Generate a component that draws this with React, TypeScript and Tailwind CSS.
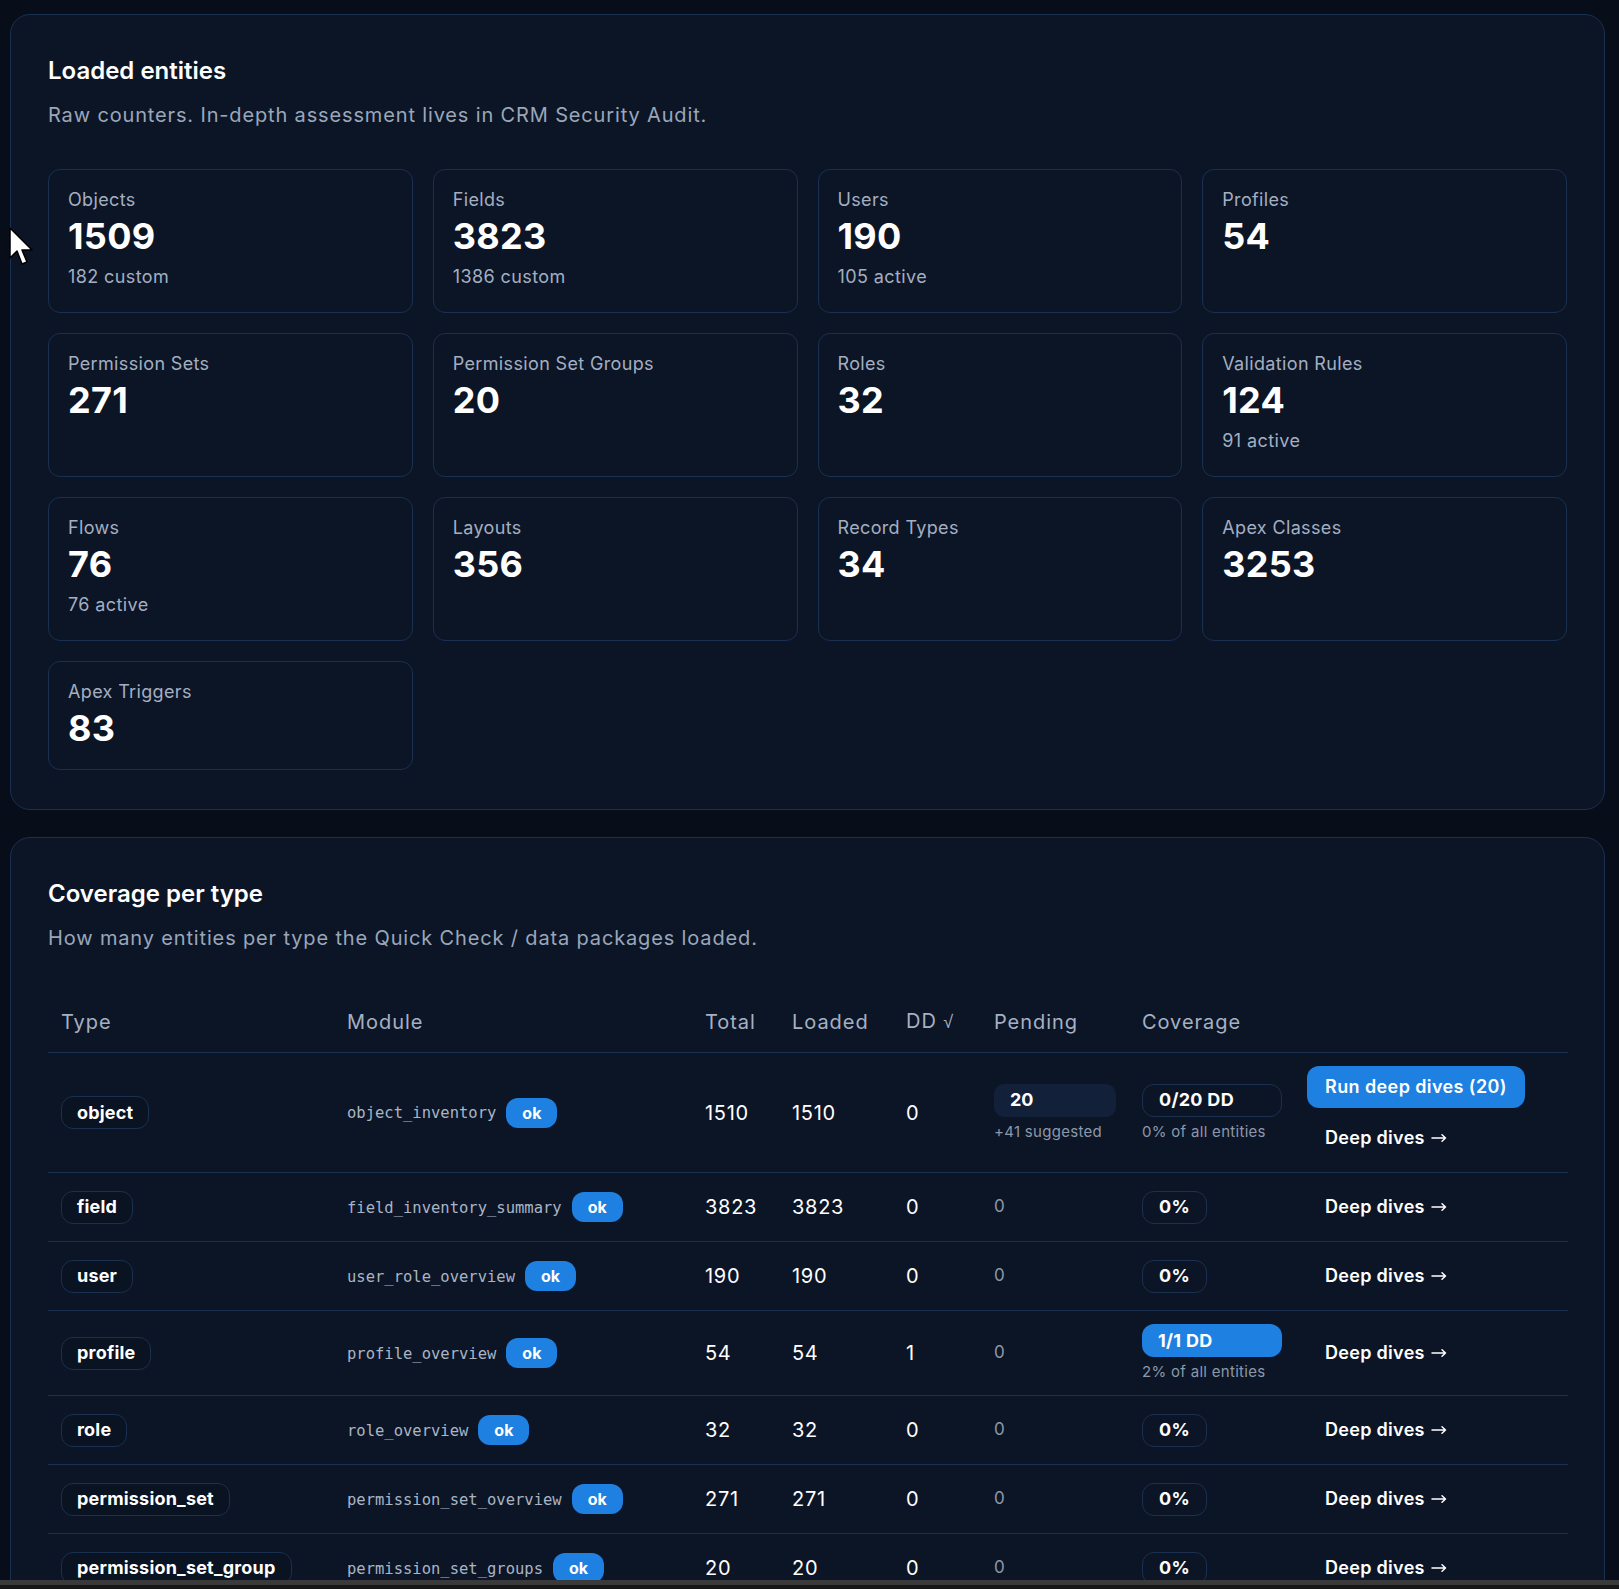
import React from "react";

type Stat = { label: string; value: string; sub?: string };

const stats: Stat[] = [
  { label: "Objects", value: "1509", sub: "182 custom" },
  { label: "Fields", value: "3823", sub: "1386 custom" },
  { label: "Users", value: "190", sub: "105 active" },
  { label: "Profiles", value: "54" },
  { label: "Permission Sets", value: "271" },
  { label: "Permission Set Groups", value: "20" },
  { label: "Roles", value: "32" },
  { label: "Validation Rules", value: "124", sub: "91 active" },
  { label: "Flows", value: "76", sub: "76 active" },
  { label: "Layouts", value: "356" },
  { label: "Record Types", value: "34" },
  { label: "Apex Classes", value: "3253" },
  { label: "Apex Triggers", value: "83" },
];

type Row = {
  type: string;
  module: string;
  total: string;
  loaded: string;
  dd: string;
  pending: string;
  pendingSub?: string;
  coverage: string;
  coverageSub?: string;
  filled?: boolean;
  run?: string;
};

const rows: Row[] = [
  {
    type: "object",
    module: "object_inventory",
    total: "1510",
    loaded: "1510",
    dd: "0",
    pending: "20",
    pendingSub: "+41 suggested",
    coverage: "0/20 DD",
    coverageSub: "0% of all entities",
    run: "Run deep dives (20)",
  },
  { type: "field", module: "field_inventory_summary", total: "3823", loaded: "3823", dd: "0", pending: "0", coverage: "0%" },
  { type: "user", module: "user_role_overview", total: "190", loaded: "190", dd: "0", pending: "0", coverage: "0%" },
  {
    type: "profile",
    module: "profile_overview",
    total: "54",
    loaded: "54",
    dd: "1",
    pending: "0",
    coverage: "1/1 DD",
    coverageSub: "2% of all entities",
    filled: true,
  },
  { type: "role", module: "role_overview", total: "32", loaded: "32", dd: "0", pending: "0", coverage: "0%" },
  { type: "permission_set", module: "permission_set_overview", total: "271", loaded: "271", dd: "0", pending: "0", coverage: "0%" },
  { type: "permission_set_group", module: "permission_set_groups", total: "20", loaded: "20", dd: "0", pending: "0", coverage: "0%" },
];

function StatCard({ s }: { s: Stat }) {
  return (
    <div className="rounded-xl border border-[#1a3050] bg-[#0c1526] px-[19px] pt-[16px] pb-[21px]">
      <div className="text-lg leading-7 tracking-[0.35px] text-[#a3afc1]">{s.label}</div>
      <div className="mt-[2px] text-4xl leading-10 font-bold tracking-[0.3px] text-white">{s.value}</div>
      {s.sub && <div className="mt-[7px] text-lg leading-7 tracking-[0.4px] text-[#a3afc1]">{s.sub}</div>}
    </div>
  );
}

function Arrow() {
  return (
    <svg className="ml-[6px]" width="16" height="10" viewBox="0 0 16 10" fill="none">
      <path d="M1 5 H14.5 M11 1.8 L14.5 5 L11 8.2" stroke="#ffffff" strokeWidth="1.5" strokeLinecap="round" strokeLinejoin="round" />
    </svg>
  );
}

function App() {
  return (
    <div className="relative h-[1589px] overflow-hidden bg-[#080e19] pt-[14px] pl-[10px] pr-[14px] font-['Inter',sans-serif] antialiased">
      <section className="rounded-[20px] border border-[#1a3050] bg-[#0c1526] px-[37px] pt-[40px] pb-[39px]">
        <h2 className="text-2xl leading-8 font-semibold text-white">Loaded entities</h2>
        <p className="mt-[14px] text-xl leading-7 tracking-[0.85px] text-[#9aa7ba]">
          Raw counters. In-depth assessment lives in CRM Security Audit.
        </p>
        <div className="mt-10 grid grid-cols-4 gap-5">
          {stats.map((s) => (
            <StatCard key={s.label} s={s} />
          ))}
        </div>
      </section>

      <section className="mt-[27px] rounded-[20px] border border-[#1a3050] bg-[#0c1526] px-[37px] pt-[40px] pb-[39px]">
        <h2 className="text-2xl leading-8 font-semibold text-white">Coverage per type</h2>
        <p className="mt-[14px] text-xl leading-7 tracking-[0.85px] text-[#9aa7ba]">
          How many entities per type the Quick Check / data packages loaded.
        </p>
        <table className="mt-[39px] w-full table-fixed border-collapse">
          <colgroup>
            <col className="w-[286px]" />
            <col className="w-[358px]" />
            <col className="w-[87px]" />
            <col className="w-[114px]" />
            <col className="w-[88px]" />
            <col className="w-[148px]" />
            <col className="w-[165px]" />
            <col className="w-[274px]" />
          </colgroup>
          <thead>
            <tr className="border-b border-[#1a3050] text-left text-xl leading-7 tracking-[0.95px] text-[#a5b1c3]">
              <th className="px-[13px] pt-4 pb-4 font-normal">Type</th>
              <th className="px-[13px] pt-4 pb-4 font-normal">Module</th>
              <th className="px-[13px] pt-4 pb-4 font-normal">Total</th>
              <th className="px-[13px] pt-4 pb-4 font-normal">Loaded</th>
              <th className="px-[13px] pt-4 pb-4 font-normal">
                DD <span className="font-['DejaVu_Sans',sans-serif] text-[18px] font-light">√</span>
              </th>
              <th className="px-[13px] pt-4 pb-4 font-normal">Pending</th>
              <th className="px-[13px] pt-4 pb-4 font-normal">Coverage</th>
              <th className="px-[13px] pt-4 pb-4 font-normal"></th>
            </tr>
          </thead>
          <tbody>
            {rows.map((r) => (
              <tr key={r.type} className="border-b border-[#1a3050] align-middle">
                <td className="px-[13px] py-[13px]">
                  <span className="inline-flex h-[33px] items-center rounded-xl border border-[#1a3050] bg-[#0a1322] px-[15px] text-lg font-bold tracking-[0.2px] text-white">
                    {r.type}
                  </span>
                </td>
                <td className="px-[13px] py-[13px]">
                  <div className="flex items-center gap-[10px]">
                    <span className="pt-[3px] font-['DejaVu_Sans_Mono',monospace] text-[15.5px] text-[#a9b4c4]">{r.module}</span>
                    <span className="inline-flex h-[30px] items-center rounded-xl bg-[#1e80e1] px-4 text-base font-bold text-white">
                      ok
                    </span>
                  </div>
                </td>
                <td className="px-[13px] py-[13px] text-xl tracking-[0.7px] text-white">{r.total}</td>
                <td className="px-[13px] py-[13px] text-xl tracking-[0.7px] text-white">{r.loaded}</td>
                <td className="px-[13px] py-[13px] text-xl tracking-[0.7px] text-white">{r.dd}</td>
                <td className="px-[13px] py-[13px]">
                  {r.pendingSub ? (
                    <div className="flex flex-col items-start">
                      <div className="flex h-[33px] w-[122px] items-center rounded-[10px] bg-[#12203a] pl-4 text-lg font-bold text-white">
                        {r.pending}
                      </div>
                      <div className="mt-[4px] text-[15px] leading-[21px] tracking-[0.3px] text-[#8b98ab]">{r.pendingSub}</div>
                    </div>
                  ) : (
                    <span className="text-[17px] text-[#8b98ab]">{r.pending}</span>
                  )}
                </td>
                <td className="px-[13px] py-[13px]">
                  <div className="flex flex-col items-start">
                    <span
                      className={
                        r.coverageSub
                          ? r.filled
                            ? "inline-flex h-[33px] w-[140px] items-center rounded-xl bg-[#1e80e1] px-4 text-lg font-bold tracking-[0.3px] text-white"
                            : "inline-flex h-[33px] w-[140px] items-center rounded-xl border border-[#1a3050] px-4 text-lg font-bold tracking-[0.3px] text-white"
                          : "inline-flex h-[33px] items-center rounded-xl border border-[#1a3050] px-4 text-lg font-bold tracking-[0.3px] text-white"
                      }
                    >
                      {r.coverage}
                    </span>
                    {r.coverageSub && (
                      <div className="mt-[4px] text-[15px] leading-[21px] tracking-[0.3px] text-[#8b98ab]">{r.coverageSub}</div>
                    )}
                  </div>
                </td>
                <td className="px-[13px] py-[13px]">
                  <div className="flex flex-col items-start gap-[9px]">
                    {r.run && (
                      <button className="inline-flex h-[42px] items-center rounded-xl bg-[#1e80e1] px-[18px] text-lg font-semibold tracking-[0.4px] text-white">
                        {r.run}
                      </button>
                    )}
                    <button className="inline-flex h-[42px] items-center px-[18px] text-lg font-semibold tracking-[0.3px] text-white">
                      Deep dives
                      <Arrow />
                    </button>
                  </div>
                </td>
              </tr>
            ))}
          </tbody>
        </table>
      </section>

      <svg className="absolute left-[9px] top-[227px]" width="26" height="40" viewBox="0 0 26 40">
        <path d="M1 1 L1 31 L8 24 L13 37 L18 35 L13 23 L23 23 Z" fill="#ffffff" stroke="#000000" strokeWidth="1.5" strokeLinejoin="round" />
      </svg>

      <div className="absolute bottom-0 left-0 right-0 flex h-[9px] flex-col">
        <div className="h-[5px] bg-[#3a3a3a]" />
        <div className="h-[4px] bg-[#161616]" />
      </div>
    </div>
  );
}

export default App;
